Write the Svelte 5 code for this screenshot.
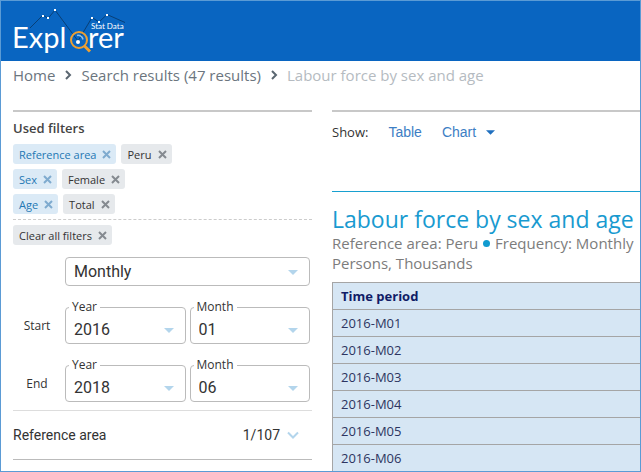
<script>
  const filterRows = [
    { dimension: 'Reference area', value: 'Peru' },
    { dimension: 'Sex', value: 'Female' },
    { dimension: 'Age', value: 'Total' }
  ];
  const range = [
    { id: 'start', label: 'Start', year: '2016', month: '01' },
    { id: 'end', label: 'End', year: '2018', month: '06' }
  ];
  const periods = ['2016-M01', '2016-M02', '2016-M03', '2016-M04', '2016-M05', '2016-M06'];
</script>

{#snippet cross()}
  <svg class="cross" viewBox="0 0 9 9" aria-hidden="true"><path d="M1 1l7 7M8 1l-7 7" /></svg>
{/snippet}

{#snippet crumbArrow()}
  <svg class="crumb-arrow" viewBox="0 0 8 12" aria-hidden="true"><path d="M2 2l4 4-4 4" /></svg>
{/snippet}

{#snippet caret()}
  <svg class="caret" viewBox="0 0 10 5" aria-hidden="true"><path d="M0 0h10L5 5z" /></svg>
{/snippet}

<div class="page">
  <header>
    <a href="#home" aria-label="Stat Data Explorer">
      <svg class="logo" viewBox="0 0 130 60" role="img" aria-label="Stat Data Explorer">
        <path class="trend" d="M29 27L42 14l5 3.500 7-8.500L77 40l14-23.500 7 4.500 8-7.500 18 8" />
        <text class="word" x="11" y="47">Expl</text>
        <text class="word" x="87" y="47">rer</text>
        <text class="tag" x="90" y="28">Stat Data</text>
        <g class="dots">
          <rect x="41" y="14" width="2" height="2" /><rect x="46" y="16" width="2" height="2" />
          <rect x="53" y="8" width="2" height="2" /><rect x="90" y="16" width="2" height="2" />
          <rect x="97" y="20" width="2" height="2" /><rect x="105" y="13" width="2" height="2" />
        </g>
        <circle class="lens" cx="78" cy="39" r="8" />
        <path class="glint" d="M76 34.500a5 5 0 0 1 6 4" />
        <path class="handle" d="M83.500 45l5.500 5.500" />
        <circle class="dot" cx="77" cy="41" r="2" />
      </svg>
    </a>
  </header>

  <nav aria-label="Breadcrumb">
    <a href="#home">Home</a>
    {@render crumbArrow()}
    <a href="#search">Search results (47 results)</a>
    {@render crumbArrow()}
    <span class="current">Labour force by sex and age</span>
  </nav>

  <div class="columns">
    <aside>
      <h2>Used filters</h2>
      <div class="chips">
        {#each filterRows as row}
          <div class="chip-row">
            <button class="chip blue">{row.dimension}{@render cross()}</button>
            <button class="chip">{row.value}{@render cross()}</button>
          </div>
        {/each}
      </div>
      <div class="clear">
        <button class="chip">Clear all filters{@render cross()}</button>
      </div>

      <div class="period">
        <div class="field frequency">
          <select aria-label="Frequency"><option>Monthly</option></select>
          {@render caret()}
        </div>
        {#each range as r}
          <div class="range">
            <span class="range-name">{r.label}</span>
            <div class="field">
              <label for="{r.id}-year">Year</label>
              <select id="{r.id}-year"><option>{r.year}</option></select>
              {@render caret()}
            </div>
            <div class="field">
              <label for="{r.id}-month">Month</label>
              <select id="{r.id}-month"><option>{r.month}</option></select>
              {@render caret()}
            </div>
          </div>
        {/each}
      </div>

      <button class="accordion">
        <span>Reference area</span>
        <span class="count">1/107</span>
        <svg class="chevron" viewBox="0 0 12 8" aria-hidden="true"><path d="M1 1.500l5 5 5-5" /></svg>
      </button>
    </aside>

    <main>
      <div class="show">
        <span>Show:</span>
        <button>Table</button>
        <button>Chart {@render caret()}</button>
      </div>
      <section>
        <h1>Labour force by sex and age</h1>
        <p>Reference area: Peru <i class="bullet"></i> Frequency: Monthly</p>
        <p>Persons, Thousands</p>
        <table>
          <thead><tr><th scope="col">Time period</th></tr></thead>
          <tbody>
            {#each periods as p}
              <tr><td>{p}</td></tr>
            {/each}
          </tbody>
        </table>
      </section>
    </main>
  </div>
</div>

<style>
  :global(body) {
    margin: 0;
    background: #fff;
  }
  .page {
    box-sizing: border-box;
    height: 100vh;
    overflow: hidden;
    border: 1px solid #5b9bd5;
    font-family: "Open Sans", "Noto Sans", sans-serif;
    font-size: 12px;
    color: #333;
  }
  button {
    border: 0;
    background: none;
    padding: 0;
    font: inherit;
    color: inherit;
    cursor: pointer;
  }
  svg {
    fill: none;
    flex: none;
  }
  header {
    height: 60px;
    background: #0965c1;
  }
  .logo {
    display: block;
    width: 130px;
    height: 60px;
  }
  .trend {
    stroke: #083f76;
    stroke-width: 1;
  }
  .dots, .dot {
    fill: #fff;
  }
  .word, .tag {
    font-family: Lato, sans-serif;
    font-weight: 400;
    fill: #fff;
  }
  .word {
    font-size: 29px;
  }
  .tag {
    font-size: 8px;
  }
  .lens {
    stroke: #f0a030;
    stroke-width: 2;
  }
  .glint {
    stroke: #8fc0ea;
    stroke-width: 1.5;
  }
  .handle {
    stroke: #f0a030;
    stroke-width: 3;
  }
  nav {
    display: flex;
    align-items: center;
    gap: 9px;
    height: 28px;
    padding-left: 12px;
    font-size: 15px;
    white-space: nowrap;
  }
  nav a {
    color: #6b757e;
    text-decoration: none;
  }
  .current {
    color: #b5bbc1;
  }
  .crumb-arrow {
    width: 8px;
    height: 12px;
    stroke: #5a6670;
    stroke-width: 2;
  }
  .columns {
    display: grid;
    grid-template-columns: 299px 1fr;
    gap: 20px;
    padding: 21px 0 0 12px;
  }
  aside, main {
    border-top: 2px solid #c8c8c8;
  }
  h2 {
    margin: 6px 0;
    font-size: 13px;
    line-height: 20px;
    font-weight: 600;
    color: #444;
  }
  .chips {
    display: flex;
    flex-direction: column;
    gap: 5px;
    padding-bottom: 5px;
    border-bottom: 1px dashed #ccc;
  }
  .chip-row {
    display: flex;
    gap: 5px;
  }
  .chip {
    display: flex;
    align-items: center;
    gap: 6px;
    height: 20px;
    padding: 0 5px 0 6px;
    border-radius: 3px;
    background: #e6e9ec;
    font-size: 11px;
  }
  .cross {
    width: 9px;
    height: 9px;
    stroke: #858a90;
    stroke-width: 2;
  }
  .blue {
    background: #dbeaf6;
    color: #2478b4;
  }
  .blue .cross {
    stroke: #7fabcf;
  }
  .clear {
    padding: 5px 0 12px;
  }
  .period {
    padding: 0 2px 8px 0;
    border-bottom: 1px solid #ddd;
  }
  .field {
    position: relative;
    box-sizing: border-box;
    height: 37px;
    border: 1px solid #bbb;
    border-radius: 4px;
  }
  .frequency {
    height: 29px;
    margin-left: 52px;
  }
  .field label {
    position: absolute;
    top: -9px;
    left: 3px;
    padding: 0 3px;
    background: #fff;
    line-height: 16px;
  }
  select {
    appearance: none;
    width: 100%;
    height: 100%;
    padding: 0 8px;
    border: 0;
    background: none;
    font: 16px Roboto, sans-serif;
    color: #333;
  }
  .range select {
    padding-top: 8px;
  }
  .caret {
    width: 10px;
    height: 5px;
    fill: #b3d5ec;
  }
  .field .caret {
    position: absolute;
    right: 11px;
    top: 12px;
    pointer-events: none;
  }
  .range .caret {
    top: 20px;
  }
  .range {
    display: grid;
    grid-template-columns: 48px 1fr 1fr;
    align-items: center;
    column-gap: 4px;
    margin-top: 21px;
  }
  .range-name {
    text-align: center;
  }
  .accordion {
    display: flex;
    align-items: center;
    width: 100%;
    height: 49px;
    padding-right: 13px;
    border-bottom: 1px solid #bbb;
    font: 14px Roboto, sans-serif;
  }
  .count {
    margin-left: auto;
    margin-right: 7px;
  }
  .chevron {
    width: 12px;
    height: 8px;
    stroke: #b3d5ec;
    stroke-width: 2;
  }
  .show {
    display: flex;
    align-items: center;
    gap: 20px;
    height: 40px;
    padding-bottom: 39px;
    border-bottom: 1px solid #18a0d0;
    font-size: 13px;
  }
  .show button {
    display: flex;
    align-items: center;
    gap: 10px;
    font: 14px "Liberation Sans", Arial, sans-serif;
    color: #3d7ec4;
  }
  .show .caret {
    width: 9px;
    fill: #1f6fbf;
  }
  h1 {
    margin: 13px 0 0;
    font-size: 23px;
    line-height: 28px;
    font-weight: 400;
    color: #189ad0;
    white-space: nowrap;
  }
  p {
    margin: 0;
    font-size: 15px;
    line-height: 20px;
    color: #7c7c7c;
    white-space: nowrap;
  }
  .bullet {
    display: inline-block;
    width: 7px;
    height: 7px;
    margin: 0 1px 2px;
    border-radius: 50%;
    background: #109bd0;
  }
  table {
    width: 100%;
    margin-top: 9px;
    border-spacing: 0;
    border: solid #a5a5a5;
    border-width: 1px 0 0 1px;
    background: #d6e6f4;
    color: #2d3561;
    font-size: 13px;
  }
  th, td {
    height: 26px;
    padding: 0 8px;
    border-bottom: 1px solid #a5a5a5;
    text-align: left;
  }
  th {
    font-weight: 700;
    color: #101c66;
  }
</style>
